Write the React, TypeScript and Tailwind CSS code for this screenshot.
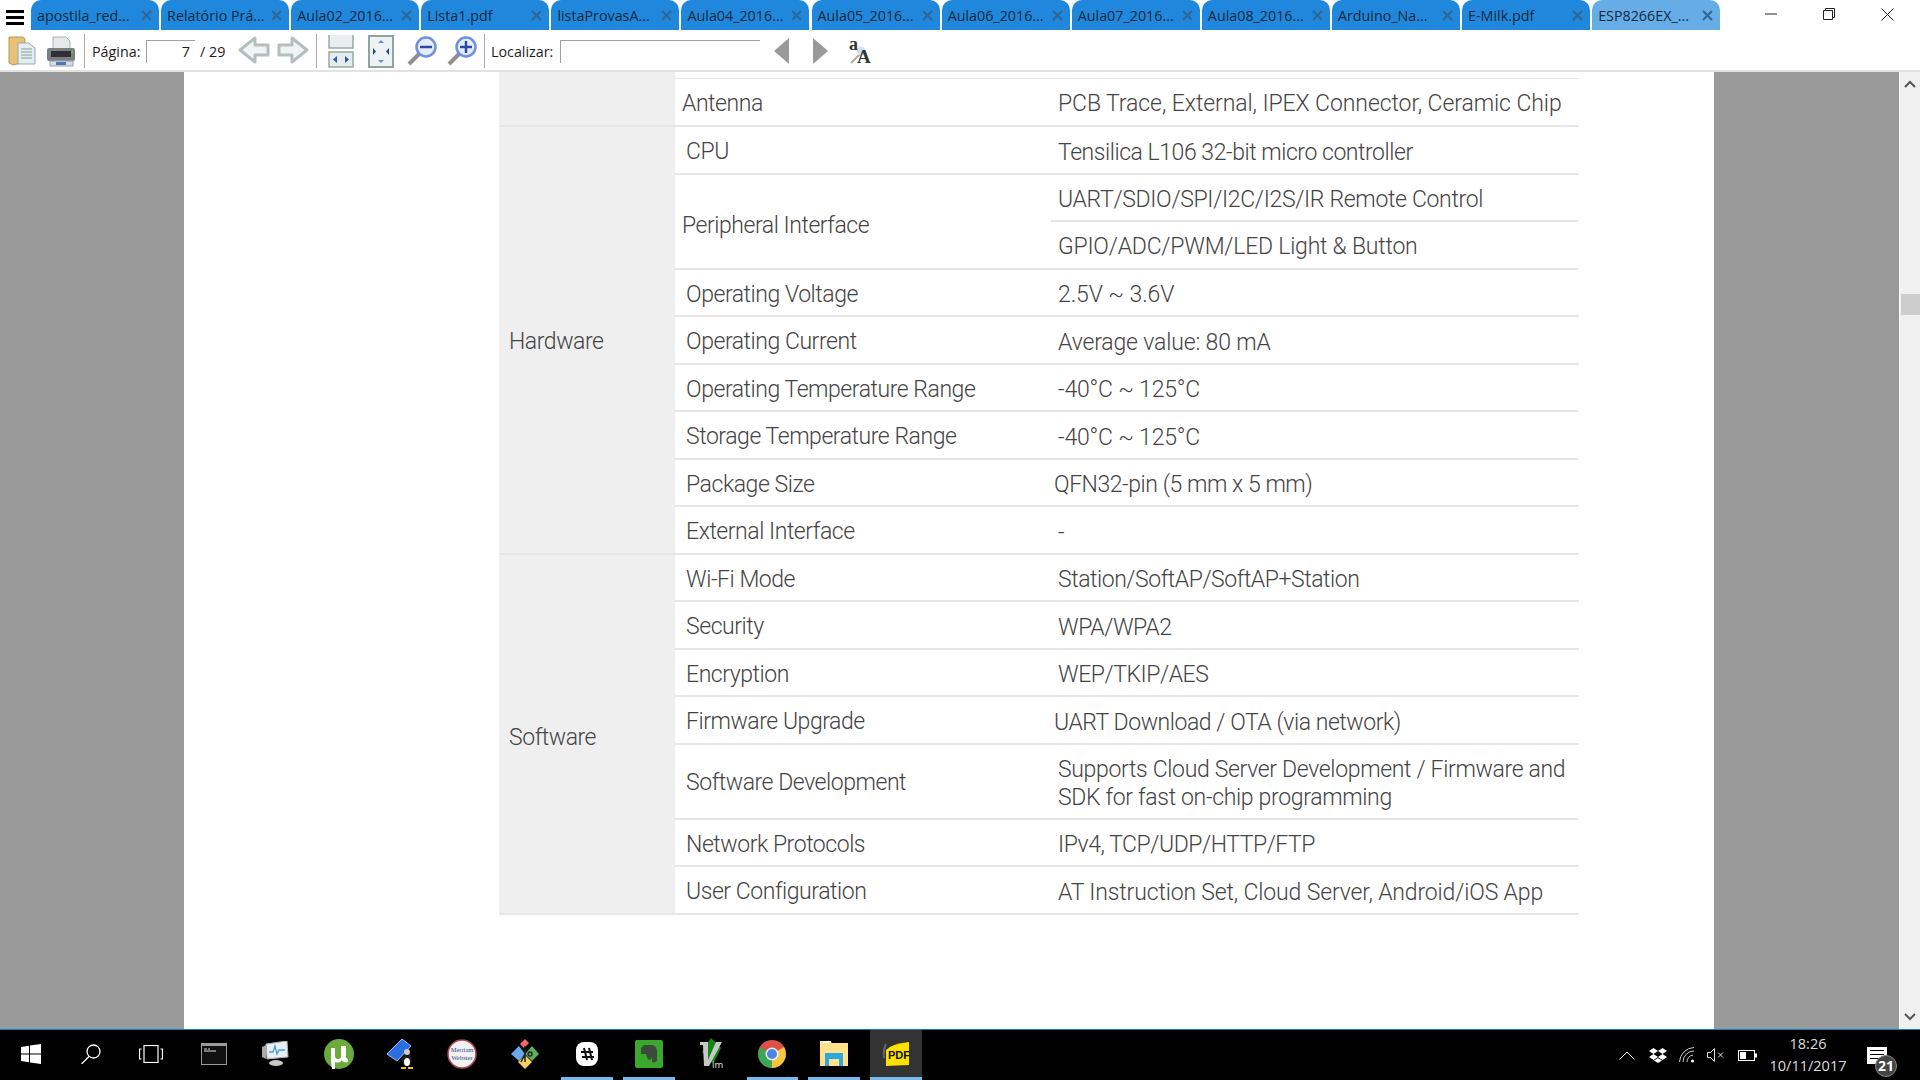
import React from 'react';

const uiFont = "font-['Open_Sans',_'Noto_Sans',sans-serif]";

const tabs = [
  'apostila_red...',
  'Relatório Prá...',
  'Aula02_2016...',
  'Lista1.pdf',
  'listaProvasA...',
  'Aula04_2016...',
  'Aula05_2016...',
  'Aula06_2016...',
  'Aula07_2016...',
  'Aula08_2016...',
  'Arduino_Na...',
  'E-Milk.pdf',
  'ESP8266EX_...',
];

const Divider = ({ ml }: { ml: string }) => <div className={`h-[34px] w-px bg-[#a8a8a8] ${ml}`} />;

const Folder = () => (
  <svg width="28" height="30" viewBox="0 0 28 30" className="ml-2">
    <path d="M1 1h14l2 2v23L5 29l-4-2z" fill="#e6c276" stroke="#b8964e" />
    <path d="M10 7h11l6 5v16H10z" fill="#e4eef0" stroke="#9aa8a8" />
    <path d="M13 13h11M13 16h11M13 19h11M13 22h11" stroke="#a9b8b8" strokeWidth="1.400" />
  </svg>
);

const Printer = () => (
  <svg width="30" height="31" viewBox="0 0 30 31" className="ml-2.5">
    <path d="M7 1h13l4 4v9H7z" fill="#e6eaea" stroke="#a8b0b0" />
    <rect x="1" y="12" width="28" height="13" rx="2" fill="#7a7e82" />
    <rect x="5" y="15" width="20" height="6" fill="#2e3033" />
    <rect x="25" y="15" width="2" height="2" fill="#4ccc60" />
    <rect x="4" y="25" width="23" height="5" fill="#d6dbe0" stroke="#9aa2aa" />
    <rect x="10" y="26" width="10" height="3" fill="#4a78b8" />
  </svg>
);

const BigArrow = ({ flip, className }: { flip?: boolean; className: string }) => (
  <svg width="32" height="32" viewBox="0 0 32 32" className={`-mt-[2px] ${className}`}>
    <path
      d={flip ? 'M2 11h13V4l15 12-15 12v-7H2z' : 'M30 11H17V4L2 16l15 12v-7h13z'}
      fill="#f1f4f4"
      stroke="#b4bfbd"
      strokeWidth="3"
      strokeLinejoin="round"
    />
  </svg>
);

const FitWidth = () => (
  <svg width="26" height="33" viewBox="0 0 26 33" className="ml-[11px]">
    <path d="M1 0v13h24V0" fill="#e9efef" stroke="#9aa8a8" strokeWidth="1.500" />
    <rect x="1" y="17" width="24" height="15" fill="#e4ecec" stroke="#9aa8a8" strokeWidth="1.500" />
    <path d="M9 21v7l-4-3.500zM17 21v7l4-3.500z" fill="#2d55c0" />
  </svg>
);

const FitPage = () => (
  <svg width="26" height="33" viewBox="0 0 26 33" className="ml-3.5">
    <rect x="1" y="1" width="24" height="31" fill="#edf2f2" stroke="#94a2a2" strokeWidth="2" />
    <path d="M13 5l3 3h-6zM13 28l-3-3h6z" fill="#6c8ae0" />
    <path d="M5 13v7l3-3.500zM21 13v7l-3-3.500z" fill="#2446b0" />
  </svg>
);

const Zoom = ({ plus, ml }: { plus?: boolean; ml: string }) => (
  <svg width="32" height="32" viewBox="0 0 32 32" className={ml}>
    <path d="M13 19L3 29" stroke="#8f8f8f" strokeWidth="4" />
    <circle cx="20" cy="12" r="9.500" fill="#e6ecf6" stroke="#6f8fe6" strokeWidth="2.500" />
    <path d={plus ? 'M14 12h12M20 6v12' : 'M14 12h12'} stroke="#2a4aa8" strokeWidth="2.500" />
  </svg>
);

const FindCase = () => (
  <svg width="28" height="34" viewBox="0 -4 28 34" className="ml-5">
    <path d="M13 15L3 25" stroke="#a8a8a8" strokeWidth="2" />
    <circle cx="13" cy="13" r="4.500" fill="#cfe0ee" />
    <text x="1" y="12" fontSize="18" fontWeight="700" fontFamily="Liberation Serif, serif" fill="#333">a</text>
    <text x="9" y="25" fontSize="19" fontWeight="700" fontFamily="Liberation Serif, serif" fill="#333">A</text>
  </svg>
);

const Toolbar = () => (
  <div className={`flex h-[42px] items-center border-b-2 border-[#e2e2e2] bg-white pt-[2px] text-[14.300px] text-[#1c1c1c] ${uiFont}`}>
    <Folder />
    <Printer />
    <Divider ml="ml-2" />
    <span className="ml-[7px] w-[54px] pt-px">Página:</span>
    <div className="flex h-[23px] w-[49px] items-center justify-end border-l border-t border-[#a0a0a0] pr-[5px] pt-px">7</div>
    <span className="ml-[5px] w-[31px] pt-px">/ 29</span>
    <BigArrow className="ml-[7px]" />
    <BigArrow flip className="ml-[7px]" />
    <Divider ml="ml-[7px]" />
    <FitWidth />
    <FitPage />
    <Zoom ml="ml-3" />
    <Zoom plus ml="ml-2" />
    <Divider ml="ml-1.5" />
    <span className="ml-1.5 w-[69px] pt-px">Localizar:</span>
    <div className="h-[23px] w-[200px] border-l border-t border-[#a0a0a0]" />
    <svg width="15" height="26" viewBox="0 0 15 26" className="ml-3.5">
      <path d="M15 0v26L0 13z" fill="#9a9a9a" />
    </svg>
    <svg width="15" height="26" viewBox="0 0 15 26" className="ml-6">
      <path d="M0 0v26l15-13z" fill="#9a9a9a" />
    </svg>
    <FindCase />
  </div>
);

const TabBar = () => (
  <div className={`flex h-[30px] bg-white ${uiFont}`}>
    <div className="flex w-[31px] flex-col gap-[3px] pl-1.5 pt-[10px]">
      <div className="h-[3px] w-[18px] bg-black" />
      <div className="h-[3px] w-[18px] bg-black" />
      <div className="h-[3px] w-[18px] bg-black" />
    </div>
    <div className="flex gap-[2.100px]">
      {tabs.map((t, i) => (
        <div
          key={t}
          className={`flex w-[128px] items-center rounded-t-[10px] pl-[6px] pr-[7px] text-[14.300px] text-[#12283c] ${
            i === tabs.length - 1 ? 'bg-[#66ade8]' : 'bg-[#2088dc]'
          }`}
        >
          <span className="flex-1 whitespace-nowrap pt-px">{t}</span>
          <svg width="11" height="11" viewBox="0 0 11 11">
            <path d="M1 1l9 9M10 1l-9 9" stroke="#2f6594" strokeWidth="2" />
          </svg>
        </div>
      ))}
    </div>
    <div className="ml-auto flex">
      <div className="flex w-[48px] items-center justify-center pb-[2px]">
        <svg width="12" height="12" viewBox="0 0 12 12"><path d="M0 6h12" stroke="#222" /></svg>
      </div>
      <div className="ml-[10px] flex w-[48px] items-center justify-center pb-[2px]">
        <svg width="12" height="12" viewBox="0 0 12 12" fill="none"><path d="M.5 2.500h9v9h-9zM2.500 2.500v-2h9v9h-2" stroke="#222" /></svg>
      </div>
      <div className="ml-[10px] mr-[9px] flex w-[48px] items-center justify-center pb-[2px]">
        <svg width="13" height="13" viewBox="0 0 13 13"><path d="M.5.500l12 12M12.500.500l-12 12" stroke="#222" /></svg>
      </div>
    </div>
  </div>
);

type Row = { label?: string; value: string; value2?: string; pl?: string; vpl?: string; vt?: string; vt2?: string };

const hardware: Row[] = [
  { label: 'CPU', value: 'Tensilica L106 32-bit micro controller' },
  { label: 'Peripheral Interface', value: 'UART/SDIO/SPI/I2C/I2S/IR Remote Control', vt: 'tracking-[-0.320px]', value2: 'GPIO/ADC/PWM/LED Light & Button', vt2: 'tracking-[-0.220px]', pl: 'pl-[7px] pt-[10px]' },
  { label: 'Operating Voltage', value: '2.5V ~ 3.6V', vt: 'tracking-[-0.100px]' },
  { label: 'Operating Current', value: 'Average value: 80 mA', vt: 'tracking-[-0.150px]' },
  { label: 'Operating Temperature Range', value: '-40°C ~ 125°C', vt: 'tracking-[-0.200px]' },
  { label: 'Storage Temperature Range', value: '-40°C ~ 125°C', vt: 'tracking-[-0.200px]' },
  { label: 'Package Size', value: 'QFN32-pin (5 mm x 5 mm)' , vpl: 'pl-[3px]' },
  { label: 'External Interface', value: '-' },
];

const software: Row[] = [
  { label: 'Wi-Fi Mode', value: 'Station/SoftAP/SoftAP+Station' },
  { label: 'Security', value: 'WPA/WPA2' },
  { label: 'Encryption', value: 'WEP/TKIP/AES' },
  { label: 'Firmware Upgrade', value: 'UART Download / OTA (via network)', vpl: 'pl-[3px]' },
  { label: 'Software Development', value: 'Supports Cloud Server Development / Firmware and SDK for fast on-chip programming', vt: 'tracking-[-0.330px]' },
  { label: 'Network Protocols', value: 'IPv4, TCP/UDP/HTTP/FTP' },
  { label: 'User Configuration', value: 'AT Instruction Set, Cloud Server, Android/iOS App', vt: 'tracking-[-0.150px]' },
];

const border = 'border-b-2 border-[#e6e6e6]';

const SpecRows = ({ title, rows }: { title: string; rows: Row[] }) => (
  <>
    {rows.map((r, i) => {
      const span = r.value2 ? 2 : 1;
      const tall = r.label === 'Software Development';
      return (
        <React.Fragment key={r.label}>
          <tr className={tall ? 'h-[75px]' : 'h-[47.500px]'}>
            {i === 0 && (
              <td
                rowSpan={rows.length + (title === 'Hardware' ? 1 : 0)}
                className={`bg-[#efefef] pl-[10px] ${title === 'Software' ? 'pt-[10px]' : 'pt-[5px]'} ${border}`}
              >
                {title}
              </td>
            )}
            <td rowSpan={span} className={`${r.pl ?? 'pl-[11px] pt-[5px]'} ${border}`}>{r.label}</td>
            <td className={`${r.vpl ?? 'pl-[7px]'} pr-2 pt-[5px] ${border} leading-[27.500px] ${r.vt ?? ''}`}>{r.value}</td>
          </tr>
          {r.value2 && (
            <tr className="h-[47.500px]">
              <td className={`pl-[7px] pt-[5px] ${border} ${r.vt2 ?? ''}`}>{r.value2}</td>
            </tr>
          )}
        </React.Fragment>
      );
    })}
  </>
);

const Document = () => (
  <div className="flex flex-1 overflow-hidden">
    <div className="w-[184px] bg-[#999999]" />
    <div className="w-[1530px] bg-white pl-[315px]">
      <table className="w-[1080px] table-fixed border-collapse font-['Roboto',sans-serif] text-[23px] font-light tracking-[-0.450px] text-[#444444]">
        <colgroup>
          <col className="w-[176px]" />
          <col className="w-[376px]" />
          <col />
        </colgroup>
        <tbody>
          <tr className="h-[6px]">
            <td rowSpan={2} className={`bg-[#efefef] ${border}`} />
            <td colSpan={2} className="border-b border-[#e6e6e6]" />
          </tr>
          <tr className="h-[48px]">
            <td className={`pl-[7px] pt-[5px] ${border}`}>Antenna</td>
            <td className={`pl-[7px] pt-[5px] tracking-[-0.080px] ${border}`}>PCB Trace, External, IPEX Connector, Ceramic Chip</td>
          </tr>
          <SpecRows title="Hardware" rows={hardware} />
          <SpecRows title="Software" rows={software} />
        </tbody>
      </table>
    </div>
    <div className="w-[185px] bg-[#999999]" />
    <div className="relative flex w-[21px] flex-col items-center justify-between border-l border-white bg-[#f0f0f0] py-[8px]">
      <svg width="12" height="8" viewBox="0 0 12 8"><path d="M1 7l5-5 5 5" stroke="#555" strokeWidth="2" fill="none" /></svg>
      <div className="absolute left-px top-[222px] h-[21px] w-[19px] bg-[#cdcdcd]" />
      <svg width="12" height="8" viewBox="0 0 12 8"><path d="M1 1l5 5 5-5" stroke="#555" strokeWidth="2" fill="none" /></svg>
    </div>
  </div>
);

const icons: { key: string; on?: boolean; active?: boolean; nudge?: string; el: React.ReactNode }[] = [
  { key: 'start', el: (
    <svg width="20" height="20" viewBox="0 0 20 20" fill="#fff"><path d="M0 3l8-1.200V9.500H0zM9 1.600L20 0v9.500H9zM0 10.500h8v7.700L0 17zM9 10.500h11V20L9 18.400z" /></svg>
  ) },
  { key: 'search', nudge: 'pr-[4px]', el: (
    <svg width="20" height="20" viewBox="0 0 20 20" fill="none" stroke="#fff" strokeWidth="1.300"><circle cx="12.500" cy="7.500" r="6.500" /><path d="M8 12.500L.5 20" /></svg>
  ) },
  { key: 'view', nudge: 'pr-[7px]', el: (
    <svg width="24" height="18" viewBox="0 0 24 18" fill="none" stroke="#fff" strokeWidth="1.200"><rect x="5" y=".5" width="14" height="17" /><path d="M2.500 4H.5v10h2M21.500 4h2v10h-2" /></svg>
  ) },
  { key: 'cmd', nudge: 'pr-[4px]', el: (
    <svg width="26" height="22" viewBox="0 0 26 22"><rect x=".5" y=".5" width="25" height="21" fill="#111" stroke="#9a9a9a" /><rect x="1" y="1" width="24" height="2" fill="#9a9a9a" /><path d="M3 6h3M7 6h2M3 8h12" stroke="#ddd" /></svg>
  ) },
  { key: 'monitor', nudge: 'pr-[7px]', el: (
    <svg width="28" height="26" viewBox="0 0 28 26"><path d="M5 3l21-3 1 16-21 2z" fill="#e8eef2" stroke="#aab" /><path d="M8 11l4 0 2-6 2 8 2-4 6 0" stroke="#4a9ad8" strokeWidth="1.300" fill="none" /><ellipse cx="15" cy="22" rx="7" ry="3" fill="#c8c8c8" /><path d="M1 6l4-2v14l-4-2z" fill="#aaa" /></svg>
  ) },
  { key: 'utorrent', nudge: 'pr-[2px]', el: (
    <svg width="30" height="30" viewBox="0 0 30 30"><circle cx="15" cy="15" r="15" fill="#6bab3c" /><path d="M7 9h4v8c0 4 5 4 6 1V7h5v11c0 1 1 2 2 2v3c-3 1-5 0-6-2-2 3-5 3-7 2v7h-3l-1-8z" fill="#fff" /></svg>
  ) },
  { key: 'book', nudge: 'pr-[2px]', el: (
    <svg width="28" height="30" viewBox="0 0 28 30"><path d="M0 15L15 0l9 7-14 15z" fill="#2a6fe0" stroke="#9cc4f4" /><ellipse cx="20" cy="21" rx="5" ry="7" fill="#1a1a1a" /><ellipse cx="20" cy="23" rx="3" ry="4" fill="#fff" /><circle cx="20" cy="13" r="3" fill="#ccc" /><path d="M14 29h5M21 29h5" stroke="#f0c020" strokeWidth="2" /></svg>
  ) },
  { key: 'mw', nudge: 'pr-[2px]', el: (
    <svg width="30" height="30" viewBox="0 0 30 30"><circle cx="15" cy="15" r="14" fill="#f2f2f2" stroke="#a84a50" strokeWidth="1.500" /><text x="15" y="13" textAnchor="middle" fontSize="6.500" fontFamily="Liberation Serif, serif" fill="#2c4a90">Merriam</text><text x="15" y="21" textAnchor="middle" fontSize="6.500" fontFamily="Liberation Serif, serif" fill="#2c4a90">Webster</text></svg>
  ) },
  { key: 'kraken', el: (
    <svg width="30" height="32" viewBox="0 0 30 32"><path d="M10 6l5-5 4 4-5 5z" fill="#f06a6a" /><path d="M1 16l8-8 6 8-6 7z" fill="#6aa8f0" /><path d="M15 16l7-8 7 8-7 7z" fill="#5cb05c" /><path d="M8 24l7-7 7 7-7 7z" fill="#f0d060" /><path d="M15 8v16M15 16l-4 8M20 14a2 2 0 1 0 .1 0" stroke="#222" strokeWidth="1.500" fill="none" /></svg>
  ) },
  { key: 'slack', on: true, el: (
    <svg width="22" height="24" viewBox="0 0 22 24"><rect width="22" height="24" rx="8" fill="#fff" /><path d="M8 6l3 12M13 6l3 12M5 10h12M6 15h12" stroke="#111" strokeWidth="2" /></svg>
  ) },
  { key: 'evernote', on: true, el: (
    <svg width="28" height="28" viewBox="0 0 28 28"><rect width="28" height="28" rx="2" fill="#3aa82c" /><path d="M6 8l3-3h7c3 0 6 2 6 6v9c0 2-3 3-5 2v-5l-2 3c-3 0-3-4-4-6H6z" fill="#3c4a3c" /></svg>
  ) },
  { key: 'vim', el: (
    <svg width="28" height="32" viewBox="0 0 28 32"><path d="M14 0l10 10-8 16L5 14z" fill="#118a11" /><path d="M3 4h8v18l8-18h6L12 28H7L6 7H3z" fill="#c8c8c8" /><text x="15" y="30" fontSize="9" fontFamily="DejaVu Sans, sans-serif" fill="#ddd">im</text></svg>
  ) },
  { key: 'chrome', on: true, el: (
    <svg width="28" height="28" viewBox="0 0 28 28"><circle cx="14" cy="14" r="14" fill="#dd5144" /><path d="M14 14L26 7a14 14 0 0 1-12 21z" fill="#f7c83e" /><path d="M14 14L2 7a14 14 0 0 0 12 21z" fill="#3aa757" /><circle cx="14" cy="14" r="6.500" fill="#f2f2f2" /><circle cx="14" cy="14" r="5" fill="#4a86e8" /></svg>
  ) },
  { key: 'files', on: true, el: (
    <svg width="28" height="28" viewBox="0 0 28 28"><path d="M0 1h10l2 2h16v23H0z" fill="#ffe28a" /><rect x="3" y="1" width="8" height="2" fill="#fff" /><path d="M5 26V13h18v13h-4v-7H9v7z" fill="#2ea8e0" /></svg>
  ) },
  { key: 'pdf', on: true, active: true, el: (
    <svg width="26" height="24" viewBox="0 0 26 24"><path d="M3 8Q8 2 26 0v23L3 24z" fill="#fbe000" /><path d="M3 2Q0 8 1 16" stroke="#666" strokeWidth="2" fill="none" /><text x="5" y="17" fontSize="11" fontWeight="700" fontFamily="Liberation Sans, sans-serif" fill="#111">PDF</text></svg>
  ) },
];

const Taskbar = () => (
  <div className={`flex h-[51px] items-stretch border-t border-[#1b7dbd] bg-black ${uiFont}`}>
    {icons.map((ic) => (
      <div key={ic.key} className={`relative flex w-[61.800px] items-center justify-center pb-[2px] ${ic.nudge ?? ''}`}>
        {ic.active && <div className="absolute inset-y-0 left-[5px] right-[5px] bg-[#333333]" />}
        {ic.on && <div className="absolute bottom-0 left-[5px] right-[5px] h-[3px] bg-[#76b9ed]" />}
        <div className="relative flex">{ic.el}</div>
      </div>
    ))}
    <div className="ml-auto flex items-center">
      <svg width="16" height="9" viewBox="0 0 16 9" fill="none" stroke="#fff"><path d="M.5 8.500L8 1l7.500 7.500" /></svg>
      <svg width="18" height="15" viewBox="0 0 18 15" fill="#fff" className="ml-3.5"><path d="M4.500 0L9 3 4.500 6 0 3zM13.500 0L18 3l-4.500 3L9 3zM4.500 6L9 9l-4.500 3L0 9zM13.500 6L18 9l-4.500 3L9 9zM9 10l4 2.500L9 15l-4-2.500z" /></svg>
      <svg width="16" height="16" viewBox="0 0 16 16" fill="none" stroke="#ccc" className="ml-3"><path d="M.5 15A15 15 0 0 1 15 .5M4 15A11 11 0 0 1 15 4M8 15a7 7 0 0 1 6-7" /><circle cx="13.500" cy="14" r="1.500" fill="#fff" stroke="none" /></svg>
      <svg width="18" height="14" viewBox="0 0 18 14" fill="none" stroke="#ddd" className="ml-3"><path d="M.5 4.500h3l4-4v13l-4-4h-3zM11 4.500l5 5M16 4.500l-5 5" /></svg>
      <svg width="19" height="11" viewBox="0 0 19 11" className="ml-[13px]"><rect x=".5" y=".5" width="16" height="10" fill="none" stroke="#fff" /><rect x="2" y="2" width="6" height="7" fill="#fff" /><rect x="17" y="3.500" width="2" height="4" fill="#fff" /></svg>
      <div className="ml-[23px] flex w-[56px] flex-col items-center text-[14.500px] leading-[22px] text-[#dcdcdc]">
        <span>18:26</span>
        <span>10/11/2017</span>
      </div>
      <div className="relative ml-[31px] mr-[33px] h-[17px] w-[20px] self-center bg-white">
        <div className="mx-[3px] mt-[3px] h-px bg-black" />
        <div className="mx-[3px] mt-[3px] h-px bg-black" />
        <div className="mx-[3px] mt-[3px] h-px bg-black" />
        <div className="absolute -bottom-[13px] -right-[10px] flex h-[22px] w-[22px] items-center justify-center rounded-full border border-[#888] bg-[#444] text-[14px] font-bold text-white">
          21
        </div>
      </div>
    </div>
  </div>
);

export default function App() {
  return (
    <div className="flex h-screen w-[1920px] flex-col overflow-hidden bg-white">
      <TabBar />
      <Toolbar />
      <Document />
      <Taskbar />
    </div>
  );
}
